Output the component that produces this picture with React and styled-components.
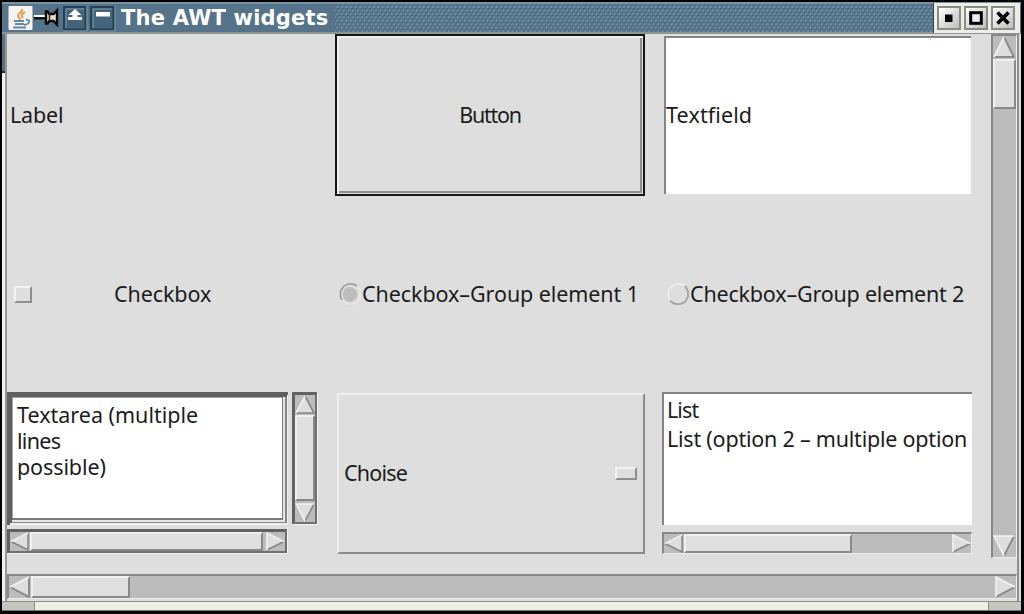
import React from 'react';
import styled, { createGlobalStyle, css } from 'styled-components';

const Global = createGlobalStyle`
  * { box-sizing: border-box; }
  body { margin: 0; background: #000; }
`;

const Frame = styled.div`
  width: 1024px; height: 614px; overflow: hidden;
  display: flex; flex-direction: column;
  background: #dedede;
  border: solid #000; border-width: 2px 3px 3px 2px;
  font-family: "Noto Sans", "Open Sans", sans-serif;
  font-size: 21.5px; color: #1c1c1c;
`;
const TitleBar = styled.header`
  height: 32px; flex: none; display: flex; align-items: center;
  background: #557489; border-top: 2px solid #7793a4; border-bottom: 2px solid #8c9496;
`;
const TitleIcons = styled.div`
  width: 114px; height: 28px; margin-left: 5px; flex: none;
  svg { display: block; }
`;
const Title = styled.h1`
  margin: 0; width: 214px; flex: none; color: #fff; white-space: nowrap;
  font: bold 21px/28px "DejaVu Sans", sans-serif; letter-spacing: 0.2px;
`;
const Grip = styled.div`flex: 1; height: 28px; svg { display: block; }`;
const WindowButtons = styled.div`
  height: 30px; width: 87px; margin-right: 1px; padding: 3px 3px 0 3px; flex: none;
  display: flex; gap: 3px; background: #eeeee8; border-left: 1px solid #33434e;
`;
const WinButton = styled.button`
  width: 24px; height: 24px; padding: 0; border: 2px solid #8b8b88;
  background: linear-gradient(135deg, #fff, #bdbdbd);
  svg { display: block; }
`;
const Middle = styled.div`display: flex; height: 567px; flex: none;`;
const LeftEdge = styled.div`
  width: 5px; flex: none; border-right: 2px solid #979793;
  background: linear-gradient(#557489 0 37px, #1c2830 37px 39px, #f2f2ec 39px);
`;
const RightEdge = styled.div`
  width: 4px; flex: none; background: #dfe0d8; border-left: 2px solid #8f8f8c;
`;
const Client = styled.main`flex: 1; min-width: 0; display: flex; flex-direction: column;`;
const Pane = styled.div`display: flex; height: 524px; flex: none;`;
const Grid = styled.div`
  width: 984px; flex: none; display: grid;
  grid-template: repeat(3, 162px) / repeat(3, 311px); gap: 17px;
`;
const Cell = styled.div`display: flex; align-items: center; min-width: 0;`;
const ColumnCell = styled(Cell)`flex-direction: column; align-items: stretch;`;
const Text = styled.span`
  white-space: pre; line-height: ${p => p.$lh || 26}px; letter-spacing: ${p => p.$track || 0}px;
  margin-left: ${p => p.$ml || 0}px; padding-bottom: ${p => p.$lift || 0}px;
`;
const PushButton = styled.button`
  display: flex; align-items: center; justify-content: center;
  width: 310px; height: 162px; padding: 0; font: inherit; color: inherit;
  background: #dedede; border: 2px solid #161616;
  box-shadow: inset 2px 2px #f0f0f0, inset -1px -1px #dedede, inset -3px -3px #8f8f8f;
`;
const TextField = styled.div`
  width: 307px; height: 158px; margin-left: 1px; background: #fff; display: flex; align-items: center;
  border: solid #858585; border-width: 2px 0 0 2px;
`;
const Box = styled.span`
  width: ${p => p.$w}px; height: ${p => p.$h}px; flex: none; background: #dedede;
  border: 2px solid; border-color: #f2f2f2 #8e8e8e #8e8e8e #f2f2f2;
  margin: ${p => p.$m};
`;
const ChoiceBox = styled.div`
  width: 308px; height: 161px; margin: 1px 0 0 2px; display: flex; align-items: center; justify-content: space-between;
  border: 2px solid; border-color: #efefef #8c8c8c #8c8c8c #efefef;
`;
const AreaRow = styled.div`display: flex; gap: 4px; height: 133px;`;
const TextArea = styled.div`
  width: 281px; height: 133px; padding: 10px 6px 7px 10px; background: #fff;
  box-shadow: inset 3px 3px #5f5f5f, inset -1px -2px #efefef, inset 5px 5px #5f5f5f,
    inset -3px -3px #858585, inset -5px -5px #e6e6e6, inset -6px -7px #7c7c7c, inset 6px 6px #a2a2a2;
  display: flex; flex-direction: column;
`;
const ListBox = styled.div`
  width: 310px; height: 133px; margin-left: -1px; padding: 1px 0 0 3px; background: #fff; overflow: hidden;
  border: solid #858585; border-width: 2px 0 0 2px;
  display: flex; flex-direction: column;
`;
const Bar = styled.div`
  display: flex; flex: none; flex-direction: ${p => p.$v ? 'column' : 'row'};
  width: ${p => p.$w}px; height: ${p => p.$h}px; margin: ${p => p.$m || 0}; gap: 1px;
  background: #bcbcbc; border: solid;
  ${p => p.$deep ? css`
    border-width: 3px 2px 2px 3px; border-color: #626262 #707070 #707070 #626262;
    box-shadow: 1px 1px #f3f3f3;
  ` : css`
    border-width: 2px 1px 1px 2px; border-color: #878787 #ededed #ededed #878787;
  `}
  svg { display: block; flex: none; }
`;
const Thumb = styled.div`
  flex: none; ${p => p.$v ? 'height' : 'width'}: ${p => p.$size}px;
  background: #dfdfdf; border: 2px solid;
  border-color: #f0f0f0 #888 #888 #f0f0f0;
`;
const Space = styled.div`flex: 1;`;
const BottomEdge = styled.footer`
  flex: 1; display: flex; justify-content: space-between;
  border-top: 1px solid #8f8f8c; border-bottom: 1px solid #777; background: #eeefe4;
`;
const Corner = styled.div`
  width: 33px; background: #c4c6bd; border: solid #8b8b85;
  border-width: ${p => p.$right ? '0 0 0 1px' : '0 1px 0 0'};
`;

const shapes = {
  up: ['10,1 1,19 19,19', '1,19 10,1', '10,1 19,19 1,19'],
  down: ['1,1 19,1 10,19', '19,1 1,1 10,19', '10,19 19,1'],
  left: ['1,10 19,1 19,19', '19,1 1,10', '1,10 19,19 19,1'],
  right: ['1,1 19,10 1,19', '19,10 1,1 1,19', '1,19 19,10'],
};
function Arrow({ dir, w = 20, h = 20 }) {
  const [face, light, dark] = shapes[dir];
  return (
    <svg width={w} height={h} viewBox="0 0 20 20" preserveAspectRatio="none">
      <polygon points={face} fill="#dedede" />
      <polyline points={dark} fill="none" stroke="#858585" strokeWidth="1.6" />
      <polyline points={light} fill="none" stroke="#f1f1f1" strokeWidth="1.6" />
    </svg>
  );
}
function ScrollBar({ vertical, w, h, m, deep, thumb, aw, ah }) {
  return (
    <Bar $v={vertical} $w={w} $h={h} $m={m} $deep={deep}>
      <Arrow dir={vertical ? 'up' : 'left'} w={aw} h={ah} />
      <Thumb $v={vertical} $size={thumb} />
      <Space />
      <Arrow dir={vertical ? 'down' : 'right'} w={aw} h={ah} />
    </Bar>
  );
}
const RadioSvg = styled.svg`flex: none; margin-left: 3px;`;
function Radio({ on }) {
  return (
    <RadioSvg width="24" height="24" viewBox="0 0 24 24" fill="none" strokeWidth="1.5">
      {on && <circle cx="12" cy="12.5" r="7.4" fill="#bdbdbd" />}
      <path d="M4 18 L2.5 15 V9 L6 4 L10 2 H15 L19 4" stroke={on ? '#989898' : '#f2f2f2'} />
      <path d="M19 4 L22 9 V15 L19 20 L15 22 H9 L4 19" stroke={on ? '#e6e6e6' : '#999'} />
    </RadioSvg>
  );
}

export default function App() {
  return (
    <>
      <Global />
      <Frame>
        <TitleBar>
          <TitleIcons>
            <svg width="114" height="28" viewBox="7 4 114 28">
              <rect x="8.5" y="6" width="24" height="24" rx="1" fill="#f5f3f0" />
              <path d="M22 9c1 4-5 4-4 7 .5 2 2 2 2 4M25 12c-4 2-4 4-2 6" stroke="#e59a4c" strokeWidth="2" fill="none" />
              <path d="M14 21h10M15 24h9M13 27.5h13M26 20c5-1 4 4-2 5" stroke="#6089a6" strokeWidth="1.8" fill="none" />
              <path d="M34 18h12" stroke="#111" strokeWidth="3" />
              <path d="M34 16h12" stroke="#fff" strokeWidth="2" />
              <path d="M46 11.5h1.5l2 2.5h4l3.5-3.5v14L53.5 21h-4l-2 2.5H46z" fill="#eadfc9" stroke="#080808" strokeWidth="2.4" />
              <path d="M49.5 14v7" stroke="#222" strokeWidth="1.5" />
              <g fill="#456479" stroke="#263f52" strokeWidth="2">
                <rect x="64" y="7" width="21.5" height="22.5" />
                <rect x="91" y="7" width="22.5" height="22.5" />
              </g>
              <path d="M63 31h24V6M90 31h25V6M66 28V9h18M93 28V9h19" fill="none" stroke="#7897aa" />
              <path d="M75 9l6.5 6h-4v2h-5v-2h-4zM68 17h14v3H68zM96 12h14v4.5H96z" fill="#fff" />
            </svg>
          </TitleIcons>
          <Title>The AWT widgets</Title>
          <Grip>
            <svg width="100%" height="28">
              <defs>
                <pattern id="grip" x="1" y="1" width="4.55" height="6.9" patternUnits="userSpaceOnUse">
                  <path d="M.5 2.6L2 1.2M2.8 6.1L4.2 4.7" stroke="#7c9aae" strokeWidth="1.6" />
                  <path d="M1.7 3.6H3.2M4 .3h.55M0 .3h.9" stroke="#3f5d74" strokeWidth="1.3" />
                </pattern>
              </defs>
              <rect width="100%" height="28" fill="url(#grip)" />
            </svg>
          </Grip>
          <WindowButtons>
            <WinButton aria-label="Minimize"><svg width="20" height="20"><rect x="6" y="6.5" width="7.5" height="7.5" /></svg></WinButton>
            <WinButton aria-label="Maximize"><svg width="20" height="20"><rect x="4.7" y="4.7" width="10.6" height="10.6" fill="#eee" stroke="#000" strokeWidth="3" /></svg></WinButton>
            <WinButton aria-label="Close"><svg width="20" height="20"><path d="M4.5 4.5l11 11M15.5 4.5l-11 11" stroke="#000" strokeWidth="3.6" /></svg></WinButton>
          </WindowButtons>
        </TitleBar>
        <Middle>
          <LeftEdge />
          <Client>
            <Pane>
              <Grid>
                <Cell><Text $ml={3} $track={-0.2}>Label</Text></Cell>
                <Cell><PushButton><Text $track={-1.3}>Button</Text></PushButton></Cell>
                <Cell><TextField><Text $track={0.12} $lift={2}>Textfield</Text></TextField></Cell>

                <Cell><Box $w={18} $h={17} $m="0 0 0 7px" /><Text $ml={82} $track={-0.1}>Checkbox</Text></Cell>
                <Cell><Radio on /><Text $track={-0.08}>Checkbox–Group element 1</Text></Cell>
                <Cell><Radio /><Text $track={-0.2}>Checkbox–Group element 2</Text></Cell>

                <ColumnCell>
                  <AreaRow>
                    <TextArea>
                      <Text>Textarea (multiple</Text>
                      <Text $track={-0.7}>lines</Text>
                      <Text $track={-0.1}>possible)</Text>
                    </TextArea>
                    <ScrollBar vertical deep w={25} h={132} thumb={86} aw={20} ah={19} />
                  </AreaRow>
                  <ScrollBar deep w={280} h={24} m="4px 0 0" thumb={233} aw={19} ah={19} />
                </ColumnCell>
                <Cell>
                  <ChoiceBox>
                    <Text $ml={5} $track={-0.8} $lift={2}>Choise</Text>
                    <Box $w={22} $h={13} $m="0 6px 0 0" />
                  </ChoiceBox>
                </Cell>
                <ColumnCell>
                  <ListBox>
                    <Text $lh={29} $track={-0.9}>List</Text>
                    <Text $lh={29} $track={-0.22}>List (option 2 – multiple option</Text>
                  </ListBox>
                  <ScrollBar w={310} h={22} m="7px 0 0 -1px" thumb={168} aw={19} ah={19} />
                </ColumnCell>
              </Grid>
              <ScrollBar vertical w={26} h={524} thumb={50} aw={22} ah={22} />
            </Pane>
            <ScrollBar w={1010} h={25} m="16px 0 0" thumb={99} aw={21} ah={22} />
          </Client>
          <RightEdge />
        </Middle>
        <BottomEdge><Corner /><Corner $right /></BottomEdge>
      </Frame>
    </>
  );
}
